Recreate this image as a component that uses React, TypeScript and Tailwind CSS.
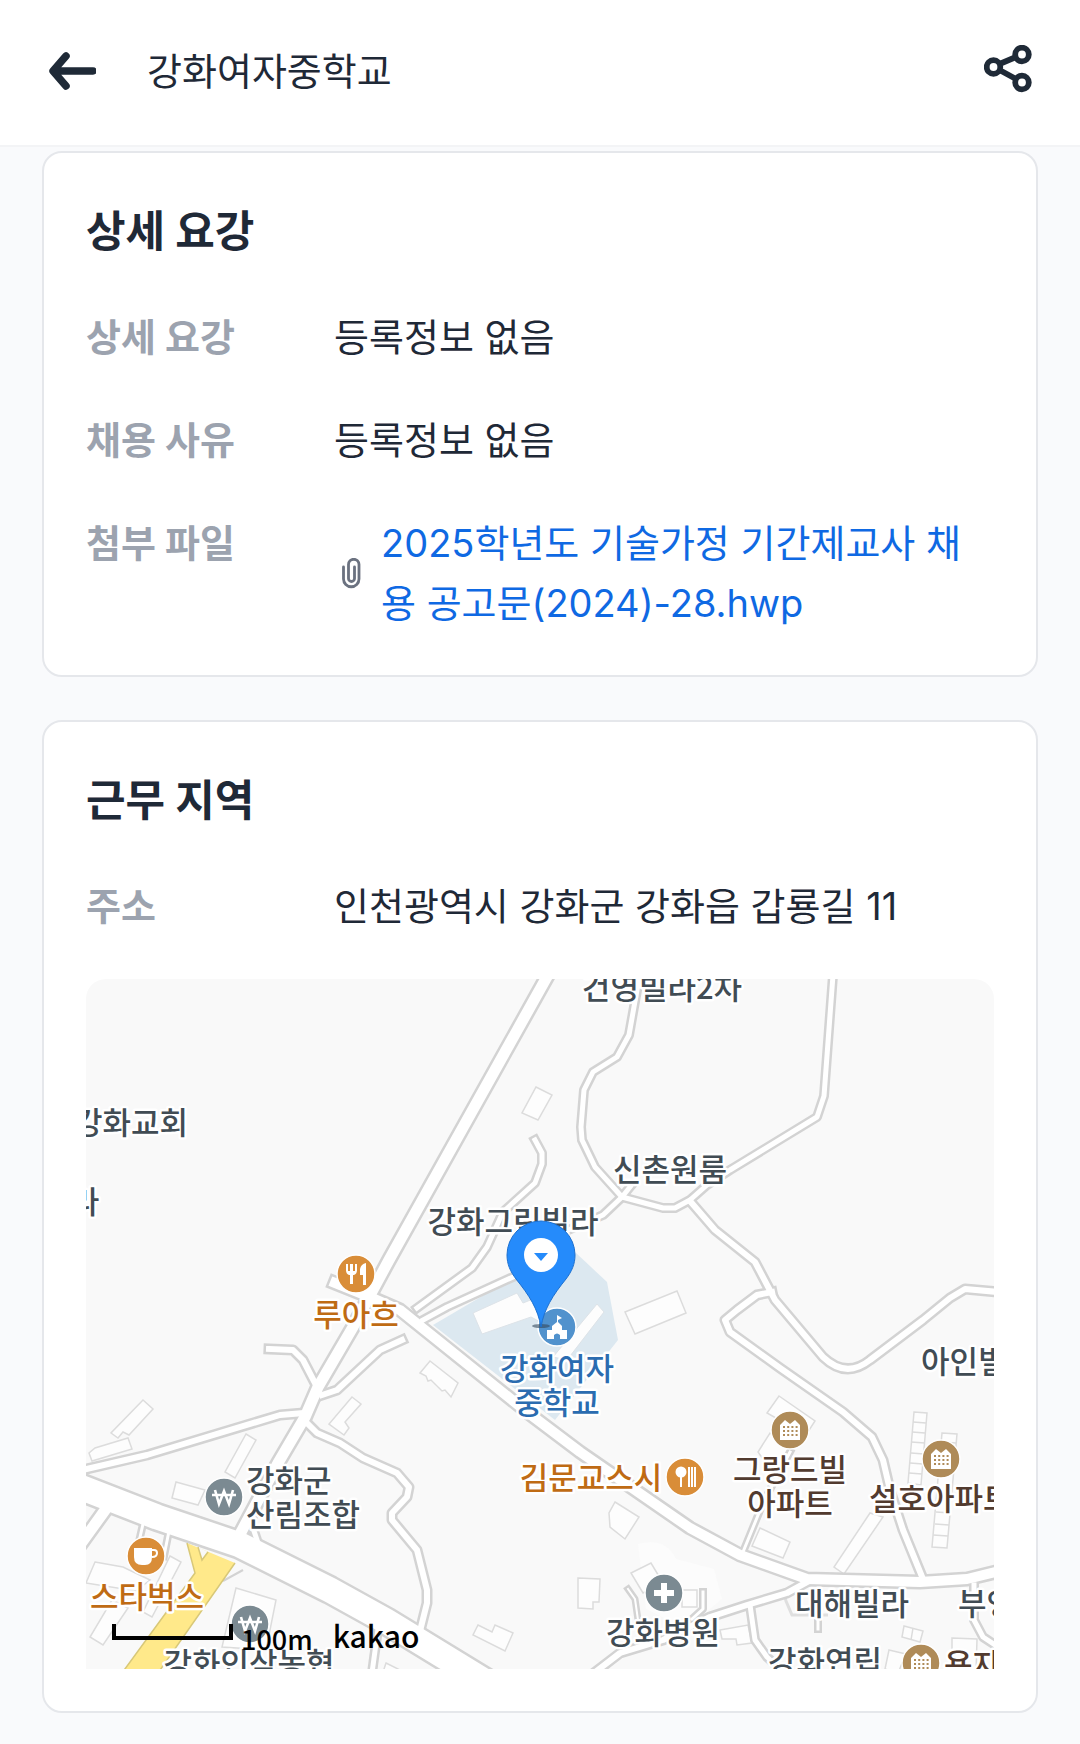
import type { ReactNode } from "react";

/* =========================================================
   Map data
========================================================= */
type Road = { d: string; w: number };
type PoiKind = "food" | "bistro" | "cafe" | "bank" | "hospital" | "school" | "apartment";
type Poi = { kind: PoiKind; x: number; y: number };
type Label = {
  text: string;
  x: number;
  y: number;
  color?: string;
  anchor?: "start" | "middle";
};

const ROADS: Road[] = [
  { d: "M449 161L456 174V185L449 204L417 233L401 268L386 289L331 329", w: 9 },
  { d: "M427 298L361 328L337 341", w: 9 },
  { d: "M553 0L551 11L543 56L531 78L507 93L498 111L495 148L496 161L509 188L536 218L577 229H589L604 221L621 206L644 191L731 138L738 117L747 -4", w: 9 },
  { d: "M544 208L536 218L517 236L480 252", w: 9 },
  { d: "M604 222L629 251L669 283L689 321L737 378Q760 400 784 381L837 341L864 319L879 310L912 313", w: 10 },
  { d: "M686 313L671 316L651 331L639 341L644 353L694 389L757 433L786 458L797 481L804 511L817 551L837 600", w: 10 },
  { d: "M657 573L677 524L704 473", w: 7 },
  { d: "M721 603L701 614L661 626L624 638L577 661L534 674L508 694", w: 10 },
  { d: "M664 626L669 661L681 678L694 690", w: 9 },
  { d: "M888 606V641L897 658L912 668", w: 9 },
  { d: "M183 370L207 371L217 381L231 408", w: 10 },
  { d: "M236 416L251 411L294 371L316 361", w: 10 },
  { d: "M218 434L194 436L61 476L-4 491", w: 10 },
  { d: "M221 444L231 454L254 464L277 479L311 494L323 508L321 518L306 534V541L331 571L341 611V624L335 648", w: 10 },
  { d: "M542 610L549 620L552 641", w: 6 },
  { d: "M732 636V650", w: 7 },
  { d: "M17 534L-6 566", w: 15 },
  { d: "M57 545L52 567", w: 7 },
  { d: "M83 552L78 577", w: 7 },
  { d: "M167 549L174 570", w: 9 },
  { d: "M292 650L286 694", w: 9 },
  { d: "M617 613V630L606 640", w: 7 },
  { d: "M462 -4L303 281L267 348L232 408L219 438L192 484L153 557", w: 15 },
  { d: "M249 304L284 318L314 331L441 433L494 473L604 549L654 576L721 600L834 603L881 600L914 592", w: 14 },
  { d: "M-6 508L71 538L154 566L244 611L300 642L390 697", w: 29 },
];

const BUILDINGS = [
  "450,108 466,116 452,141 436,134",
  "539,333 591,312 600,334 549,355",
  "344,382 372,404 365,418 359,411 356,412 345,401 342,402 340,397 334,394",
  "529,523 553,538 539,560 524,548 523,534",
  "492,599 514,600 513,623 507,623 507,630 492,629",
  "392,646 406,653 409,646 427,654 419,672 387,656",
  "545,594 565,584 577,604 557,614",
  "596,611 611,611 611,628 596,628",
  "57,421 67,430 43,456 37,453 32,459 25,454",
  "3,474 9,469 42,459 46,470 6,482",
  "266,418 275,425 259,443 263,449 258,456 243,445",
  "160,455 170,461 149,499 139,493",
  "90,503 119,511 112,526 86,519",
  "9,583 37,588 64,601 50,612 0,604",
  "26,621 42,629 17,666 4,658",
  "84,577 95,583 66,638 57,633",
  "150,609 190,621 180,671 136,668",
  "693,417 729,442 720,456 681,434",
  "684,454 704,468 687,494 672,473",
  "674,549 704,563 697,579 666,567",
  "784,534 797,538 758,595 748,588",
  "828,433 841,434 835,506 822,504",
  "856,454 871,455 861,569 846,568",
  "818,647 837,652 834,663 816,658",
  "866,659 891,660 890,694 866,694",
  "634,651 662,646 666,664 651,666 650,660 636,660",
  "803,671 820,675 812,694 799,690",
  "300,684 316,692 296,696",
];

const POIS: Poi[] = [
  { kind: "food", x: 270, y: 295 },
  { kind: "school", x: 471, y: 348 },
  { kind: "bistro", x: 599, y: 498 },
  { kind: "apartment", x: 704, y: 451 },
  { kind: "apartment", x: 855, y: 480 },
  { kind: "apartment", x: 835, y: 684 },
  { kind: "hospital", x: 578, y: 614 },
  { kind: "bank", x: 138, y: 518 },
  { kind: "cafe", x: 60, y: 577 },
  { kind: "bank", x: 164, y: 645 },
];

const SLATE = "#414c54";
const ORANGE = "#bf6b14";
const BROWN = "#523b2f";
const BLUE = "#2b6cb0";

const LABELS: Label[] = [
  { text: "건영빌라2차", x: 576, y: 20 },
  { text: "강화교회", x: 45, y: 155 },
  { text: "라", x: -1, y: 234 },
  { text: "강화그린빌라", x: 427, y: 254 },
  { text: "신촌원룸", x: 584, y: 202 },
  { text: "루아흐", x: 270, y: 347, color: ORANGE },
  { text: "강화여자", x: 471, y: 401, color: BLUE },
  { text: "중학교", x: 471, y: 435, color: BLUE },
  { text: "김문교스시", x: 505, y: 510, color: ORANGE },
  { text: "강화군", x: 160, y: 513, anchor: "start" },
  { text: "산림조합", x: 160, y: 547, anchor: "start" },
  { text: "스타벅스", x: 61, y: 629, color: ORANGE },
  { text: "강화인삼농협", x: 163, y: 696 },
  { text: "그랑드빌", x: 704, y: 502, color: BROWN },
  { text: "아파트", x: 704, y: 536, color: BROWN },
  { text: "설호아파트", x: 783, y: 531, color: BROWN, anchor: "start" },
  { text: "아인빌", x: 835, y: 394, anchor: "start" },
  { text: "대해빌라", x: 766, y: 636 },
  { text: "부영", x: 872, y: 636, anchor: "start" },
  { text: "강화병원", x: 577, y: 665 },
  { text: "강화연립", x: 739, y: 694 },
  { text: "용자", x: 858, y: 697, color: BROWN, anchor: "start" },
];

const POI_COLORS: Record<PoiKind, string> = {
  food: "#d98d38",
  bistro: "#d98d38",
  cafe: "#d98d38",
  bank: "#7b8a92",
  hospital: "#7b8a92",
  school: "#5192cd",
  apartment: "#af8b58",
};

// Glyphs are drawn around (0, 0), inside a circle of radius 19
const POI_GLYPHS: Record<PoiKind, ReactNode> = {
  food: (
    <>
      <path d="M-10 -10V-4Q-10 0 -7 1H-6V10H-3V1H-2Q1 0 1 -4V-10H-1V-3H-3V-10H-6V-3H-8V-10Z" fill="#fff" />
      <path d="M10 -11V11H7V1H4V-5Q5 -10 10 -11Z" fill="#fff" />
    </>
  ),
  bistro: (
    <>
      <circle cx="-4" cy="-5" r="5.5" fill="#fff" />
      <path d="M-4 0V10M4 -10V10M7 -10V10M10 -10V10" stroke="#fff" strokeWidth="2" />
    </>
  ),
  cafe: (
    <>
      <path d="M-12 -8H6V1Q6 9 -1 9H-4Q-12 9 -12 1Z" fill="#fff" />
      <path d="M6 -6H8Q11 -6 11 -3Q11 1 6 1" fill="none" stroke="#fff" strokeWidth="2" />
    </>
  ),
  bank: (
    <path d="M-9 -7L-5 7L0 -6L5 7L9 -7M-12 -2H12" fill="none" stroke="#fff" strokeWidth="2.6" />
  ),
  hospital: <path d="M-3 -10H3V-3H10V3H3V10H-3V3H-10V-3H-3Z" fill="#fff" />,
  school: (
    <path d="M0 -12L5 -9L1 -7V-5L5 -1V3H10V12H3V8Q0 5 -3 8V12H-10V3H-5V-1L0 -5Z" fill="#fff" />
  ),
  apartment: (
    <>
      <path d="M-10 10V-5L-5 -10L0 -6L5 -10L10 -5V10Z" fill="#fff" />
      <path d="M-7 -3H8M-7 1H8M-7 5H8" stroke="#af8b58" strokeWidth="1.8" strokeDasharray="2 2.2" />
    </>
  ),
};

/* =========================================================
   Map
========================================================= */
function AreaMap() {
  return (
    <div className="relative overflow-hidden rounded-t-[20px] bg-[#f9f9f9]">
      <svg viewBox="0 0 908 690" className="block h-auto w-full" role="img" aria-label="강화여자중학교 지도">
        <path d="M552 565Q580 558 590 580L628 590L636 620L600 650L560 630Z" fill="#fcfcfc" />
        <path d="M347 346L427 299L489 273L521 303L532 361L469 441Z" fill="#dce8f0" />

        {BUILDINGS.map((points) => (
          <polygon key={points} points={points} fill="#fdfdfd" stroke="#dcdcdc" strokeWidth="1.5" />
        ))}
        <path
          d="M827 443L840 444M826 453L839 454M825 463L839 464M825 474L838 475M824 484L837 485M823 494L836 495M850 533L865 534M849 545L863 546M847 556L862 557M855 463L870 464M827 649L825 661"
          stroke="#dcdcdc"
          strokeWidth="1.5"
        />
        <polygon points="387,334 431,314 437,324 452,318 460,346 445,338 396,355" fill="#fdfdfd" stroke="#dde3e8" />
        <polygon points="511,325 518,333 481,381 467,378" fill="#fdfdfd" stroke="#dde3e8" />
        <path d="M698 614L700 622L706 636H742" fill="none" stroke="#dfdfdf" strokeWidth="3" />

        {/* road casing first, then the surface, so that junctions stay open */}
        {ROADS.map((r) => (
          <path key={r.d} d={r.d} fill="none" stroke="#d3d3d3" strokeWidth={r.w + 1} strokeLinejoin="round" strokeLinecap="square" />
        ))}
        {ROADS.map((r) => (
          <path key={r.d} d={r.d} fill="none" stroke="#fff" strokeWidth={r.w - 4} strokeLinejoin="round" strokeLinecap="square" />
        ))}
        <path d="M137 602L157 591" stroke="#d3d3d3" strokeWidth="2" />

        <path d="M101 564L149 584L72 694H36L109 594Z" fill="#ffe98a" />
        <path d="M101 564L109 594L36 694M149 584L72 694" fill="none" stroke="#d8c878" strokeWidth="1.5" />
        <path d="M112 568L116 581L122 573" fill="#f9f9f9" stroke="#d8c878" strokeWidth="1.5" />

        {POIS.map((p) => (
          <g key={`${p.x}-${p.y}`} transform={`translate(${p.x} ${p.y})`}>
            <circle r="19" fill={POI_COLORS[p.kind]} stroke="#fff" strokeWidth="1.5" />
            {POI_GLYPHS[p.kind]}
          </g>
        ))}

        <g
          fontFamily='"Noto Sans CJK KR", sans-serif'
          fontSize="31"
          fontWeight="500"
          stroke="#fff"
          strokeWidth="5"
          strokeLinejoin="round"
          paintOrder="stroke"
        >
          {LABELS.map((l) => (
            <text key={`${l.text}-${l.y}`} x={l.x} y={l.y} fill={l.color ?? SLATE} textAnchor={l.anchor ?? "middle"}>
              {l.text}
            </text>
          ))}
        </g>

        {/* marker */}
        <ellipse cx="455" cy="347" rx="9" ry="2" fill="#33475b" opacity="0.6" />
        <path
          d="M455 348C452 330 443 316 430 300C424 292 421 285 421 276A34 34 0 0 1 489 276C489 285 486 292 480 300C467 316 458 330 455 348Z"
          fill="#258bfb"
          stroke="#1c70d0"
        />
        <circle cx="455" cy="276" r="17" fill="#fff" />
        <path d="M448 274H462L455 282Z" fill="#258bfb" />
      </svg>

      <div className="absolute bottom-[16px] left-[26px] flex items-end font-['Noto_Sans_CJK_KR',sans-serif] font-medium text-black">
        <span className="mb-[13px] h-4 w-[121px] border-4 border-t-0 border-black" />
        <span className="ml-2 text-[27px] leading-[28px]">100m</span>
        <span className="ml-5 text-[30px] leading-[36px]">kakao</span>
      </div>
    </div>
  );
}

/* =========================================================
   Cards
========================================================= */
function Card({ title, children }: { title: string; children: ReactNode }) {
  return (
    <section className="rounded-[20px] border-2 border-[#e5e7eb] bg-white p-[42px]">
      <h2 className="mb-10 text-[43px] leading-[72px] font-bold">{title}</h2>
      <div className="flex flex-col gap-[43px]">{children}</div>
    </section>
  );
}

function Row({ label, children }: { label: string; children: ReactNode }) {
  return (
    <dl className="flex text-[38px] leading-[60px]">
      <dt className="w-[248px] shrink-0 font-bold text-[#9ca3af]">{label}</dt>
      <dd className="min-w-0 flex-1">{children}</dd>
    </dl>
  );
}

export default function App() {
  return (
    <div className="min-h-screen bg-[#f9fafc] pb-8 font-['Inter','Noto_Sans_CJK_KR',sans-serif] text-[#1f2937]">
      {/* HEADER */}
      <header className="flex h-[147px] items-center border-b-2 border-[#f3f4f6] bg-white px-[48px] pb-1">
        <button type="button" aria-label="뒤로" className="shrink-0">
          <svg viewBox="0 0 48 40" className="h-10 w-12" fill="none" stroke="#1f2a37" strokeWidth="7.5" strokeLinecap="round" strokeLinejoin="round">
            <path d="M45 20H6M18 5L5 20L18 35" />
          </svg>
        </button>
        <h1 className="ml-[51px] flex-1 text-[38px] leading-[60px] font-normal">강화여자중학교</h1>
        <button type="button" aria-label="공유" className="mb-1 shrink-0">
          <svg viewBox="0 0 48 48" className="size-12" fill="none" stroke="#1f2a37" strokeWidth="5.8">
            <circle cx="9.5" cy="22" r="6.8" />
            <circle cx="38" cy="9.5" r="6.8" />
            <circle cx="38" cy="37.5" r="6.8" />
            <path d="M15.5 19L32 12M15.5 25L32 34" />
          </svg>
        </button>
      </header>

      <main className="flex flex-col gap-[43px] px-[42px] pt-1">
        <Card title="상세 요강">
          <Row label="상세 요강">등록정보 없음</Row>
          <Row label="채용 사유">등록정보 없음</Row>
          <Row label="첨부 파일">
            <div className="flex items-center gap-5 pr-3 pl-2">
              <svg viewBox="0 0 19 31" className="h-[31px] w-[19px] shrink-0" fill="none" stroke="#6b7280" strokeWidth="2.8" strokeLinecap="round">
                <path d="M1.5 9V21a7.75 7.75 0 0 0 15.5 0V6.5a5 5 0 0 0-10.5 0V20.5a3 3 0 0 0 6 0V9" />
              </svg>
              <a href="#file" className="break-all text-[#0f69e3]">
                2025학년도 기술가정 기간제교사 채용 공고문(2024)-28.hwp
              </a>
            </div>
          </Row>
        </Card>

        <Card title="근무 지역">
          <Row label="주소">인천광역시 강화군 강화읍 갑룡길 11</Row>
          <AreaMap />
        </Card>
      </main>
    </div>
  );
}
